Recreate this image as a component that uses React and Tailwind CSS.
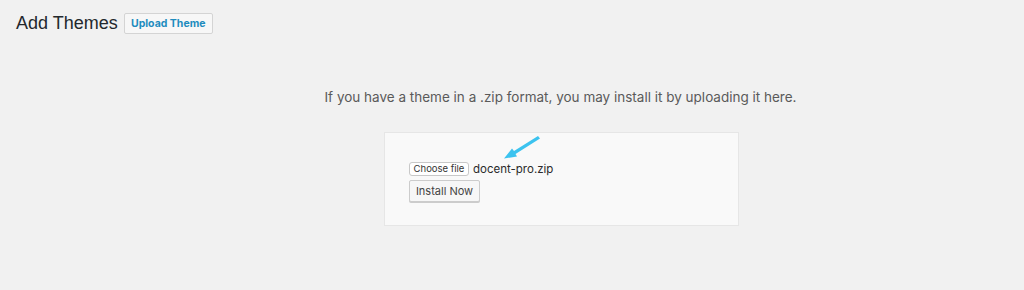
export default function App() {
  return (
    <div className="w-[1024px] h-[290px] bg-[#f1f1f1] overflow-hidden font-['Inter','Liberation_Sans',sans-serif]">
      <div className="flex items-center pl-[16px] pt-[13px]">
        <h1 className="text-[18px] leading-[21px] text-[#23282d] font-normal font-['Liberation_Sans',Arial,sans-serif]">Add Themes</h1>
        <button className="ml-[6px] h-[21px] w-[89px] bg-[#f7f7f7] border border-[#d4d4d4] rounded-[2px] text-[10.5px] font-bold text-[#1e8cbe]">Upload Theme</button>
      </div>
      <p className="mt-[53px] text-center text-[13.5px] text-[#5a5a5a] pl-[97px]">
        If you have a theme in a .zip format, you may install it by uploading it here.
      </p>
      <div className="ml-[384px] mt-[25px] w-[355px] h-[94px] bg-[#f9f9f9] border border-[#e6e6e6] relative pl-[24px] pt-[29px]">
        <svg className="absolute left-[114px] top-[2px]" width="44" height="28" viewBox="0 0 44 28">
          <path d="M39 1 L15 16 L13 13.5 L5 23.5 L18 21.5 L16.5 19 L41 3.5 Z" fill="#3cc3ef" />
        </svg>
        <div className="flex items-center h-[14px]">
          <button className="h-[14px] w-[60px] bg-white border border-[#c8c8c8] rounded-[3px] text-[9.5px] leading-[12px] text-[#333]">Choose file</button>
          <span className="ml-[4px] text-[11.5px] leading-[14px] text-[#2b2b2b]">docent-pro.zip</span>
        </div>
        <button className="mt-[4px] h-[22px] w-[71px] bg-[#f7f7f7] border border-[#cccccc] rounded-[2px] text-[11px] text-[#444] shadow-[0_1px_0_#ccc]">Install Now</button>
      </div>
    </div>
  );
}
